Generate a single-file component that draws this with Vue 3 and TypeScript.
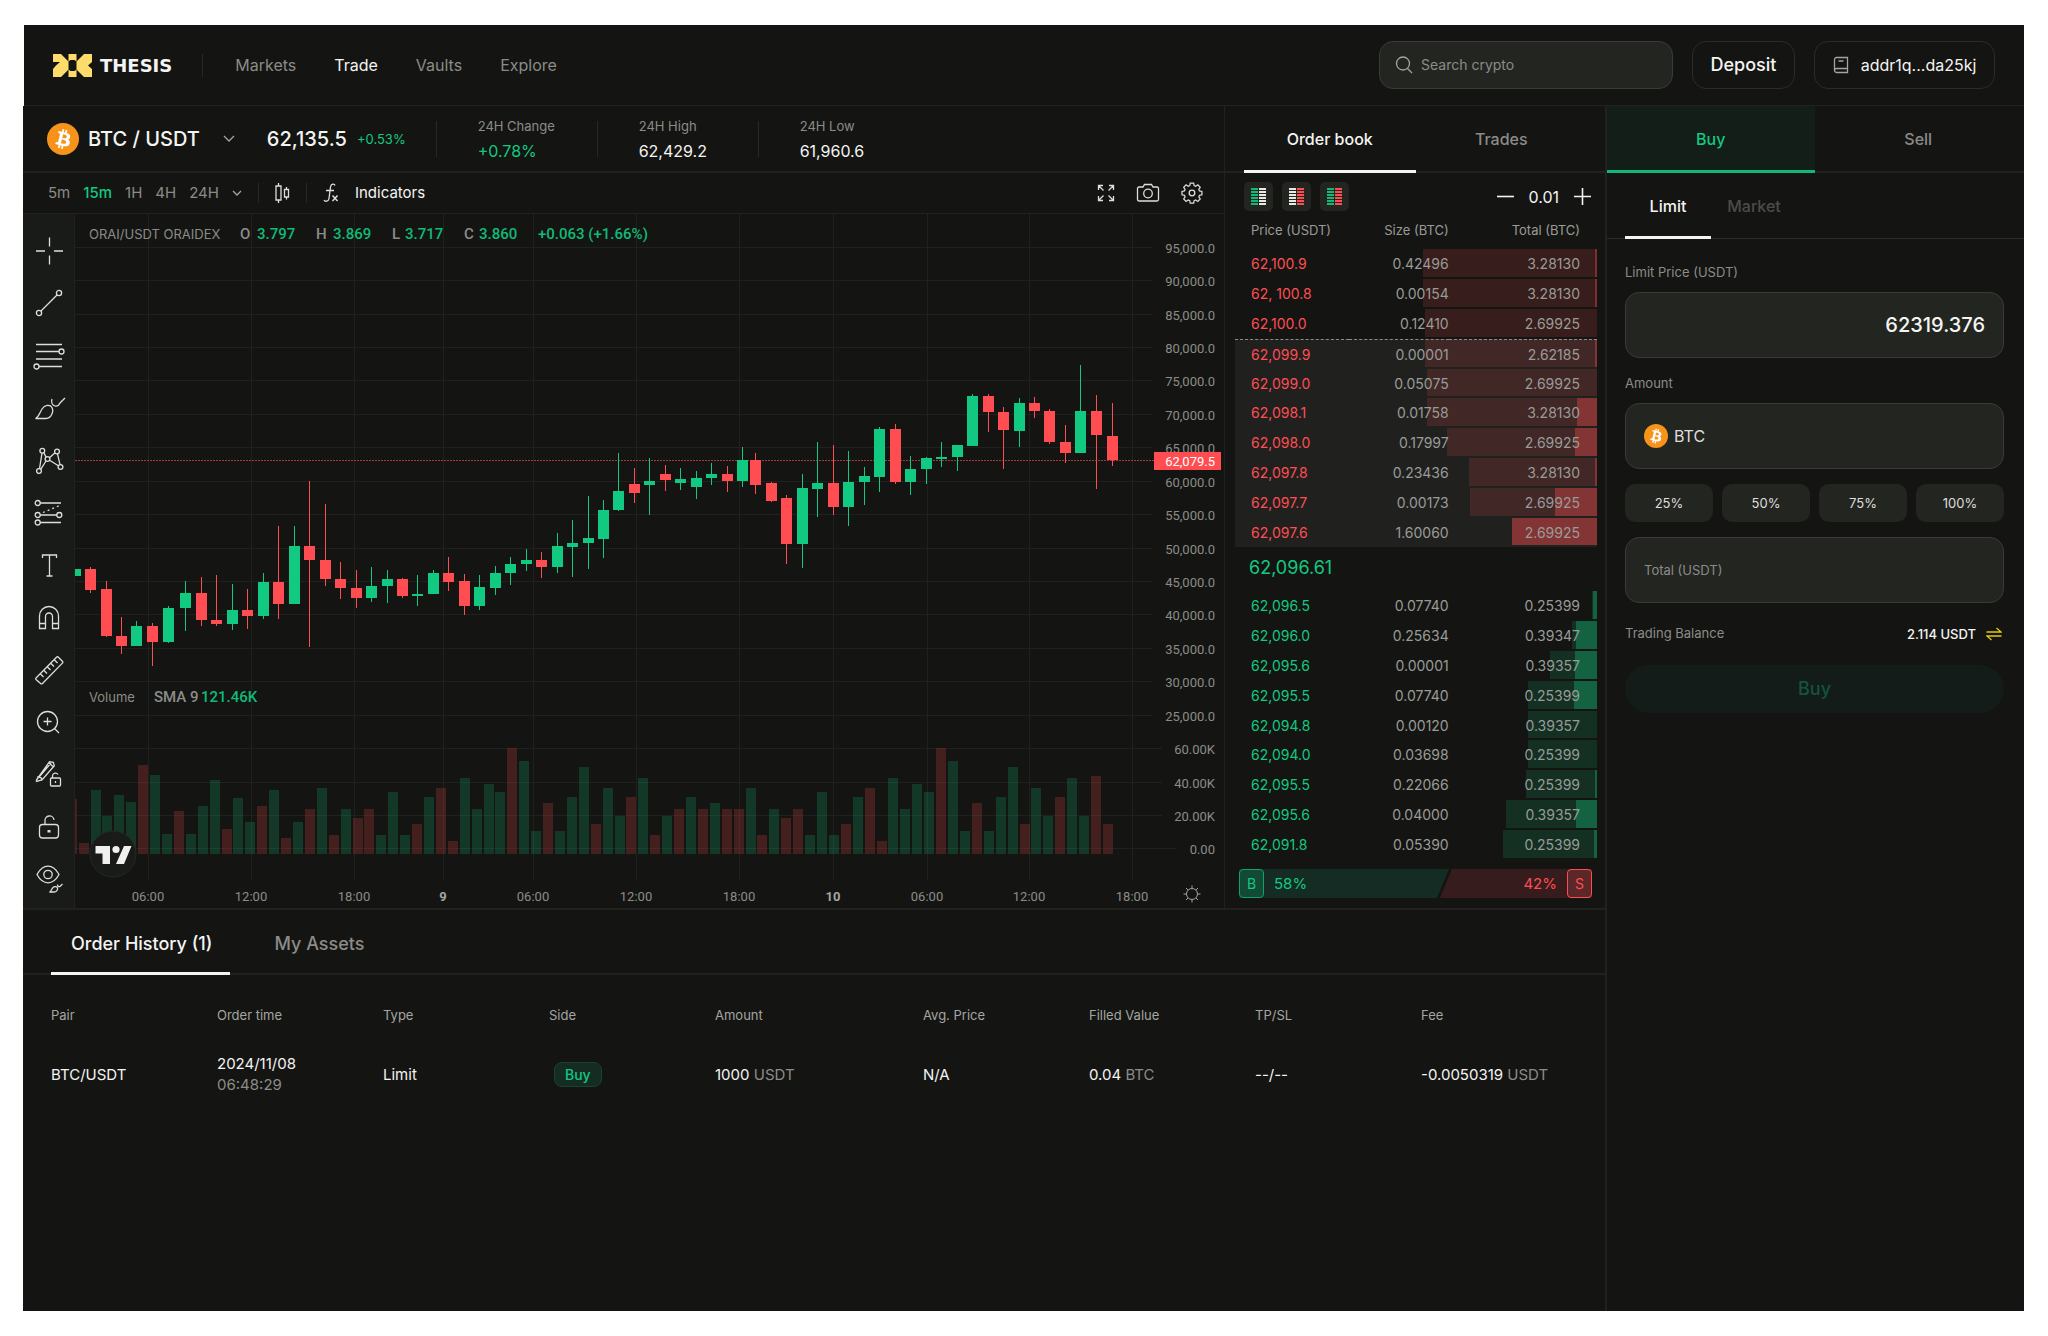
<script setup lang="ts">
import { ref } from 'vue'

type Side = 'up' | 'down'
interface Candle { x: number; side: Side; top: number; bottom: number; high: number; low: number }
interface Level { price: string; size: string; total: string; depth: number; fill: number }

const navLinks = ['Markets', 'Trade', 'Vaults', 'Explore']
const timeframes = ['5m', '15m', '1H', '4H', '24H']
const stats = [
  { label: '24H Change', value: '+0.78%', up: true },
  { label: '24H High', value: '62,429.2', up: false },
  { label: '24H Low', value: '61,960.6', up: false },
]

const gridRows = Array.from({ length: 19 }, (_, i) => ({
  y: Math.round(247.7 + i * 33.43),
  label: i < 15 ? `${95 - i * 5},000.0` : ['60.00K', '40.00K', '20.00K', '0.00'][i - 15],
  end: i < 15 ? 1152 : i < 18 ? 1162 : 1176,
}))
const gridCols = [
  { x: 148, label: '06:00' }, { x: 251, label: '12:00' }, { x: 354, label: '18:00' },
  { x: 443, label: '9', day: true }, { x: 533, label: '06:00' }, { x: 636, label: '12:00' },
  { x: 739, label: '18:00' }, { x: 833, label: '10', day: true }, { x: 927, label: '06:00' },
  { x: 1029, label: '12:00' }, { x: 1132, label: '18:00' },
]

// x, direction (1 = up), body top, body bottom, wick top, wick bottom
const rawCandles: number[][] = [
  [75, 1, 570, 577, 570, 577], [90, 0, 570, 591, 568, 594], [106, 0, 590, 637, 582, 638],
  [121, 0, 637, 647, 618, 655], [136, 1, 627, 647, 622, 647], [152, 0, 627, 643, 624, 667],
  [168, 1, 609, 643, 607, 644], [185, 1, 594, 609, 582, 632], [201, 0, 594, 621, 578, 627],
  [216, 0, 621, 625, 576, 627], [232, 1, 611, 625, 585, 631], [247, 0, 611, 617, 590, 630],
  [263, 1, 583, 617, 574, 620], [278, 0, 583, 605, 527, 620], [294, 1, 547, 605, 527, 605],
  [309, 0, 547, 561, 482, 648], [325, 0, 561, 580, 505, 587], [340, 0, 580, 589, 563, 600],
  [356, 0, 589, 599, 571, 609], [371, 1, 587, 599, 568, 603], [387, 1, 580, 587, 571, 604],
  [402, 0, 580, 597, 579, 599], [417, 1, 595, 597, 576, 607], [433, 1, 574, 595, 571, 595],
  [448, 0, 574, 583, 558, 592], [464, 0, 582, 607, 575, 616], [479, 1, 588, 607, 576, 611],
  [495, 1, 574, 589, 567, 596], [510, 1, 565, 574, 558, 586], [526, 1, 561, 565, 550, 572],
  [541, 0, 561, 568, 553, 579], [557, 1, 547, 568, 534, 574], [572, 1, 544, 548, 521, 578],
  [588, 1, 539, 544, 497, 570], [603, 1, 511, 540, 501, 559], [618, 1, 492, 511, 454, 512],
  [634, 0, 485, 494, 469, 504], [649, 1, 482, 486, 459, 516], [665, 0, 475, 481, 466, 492],
  [680, 1, 480, 484, 469, 491], [696, 1, 479, 488, 472, 500], [711, 1, 475, 479, 464, 486],
  [727, 0, 475, 482, 467, 493], [742, 1, 461, 482, 448, 488], [755, 0, 461, 486, 454, 495],
  [771, 0, 484, 502, 483, 503], [786, 0, 499, 545, 496, 565], [802, 1, 489, 545, 475, 569],
  [817, 1, 484, 490, 443, 518], [833, 0, 484, 508, 446, 516], [848, 1, 483, 508, 452, 527],
  [864, 1, 477, 483, 468, 506], [879, 1, 430, 478, 428, 493], [895, 0, 430, 483, 425, 485],
  [910, 1, 470, 483, 457, 496], [926, 1, 459, 470, 458, 485], [941, 1, 458, 460, 443, 468],
  [957, 1, 446, 458, 446, 472], [972, 1, 397, 447, 395, 447], [988, 0, 397, 413, 395, 433],
  [1003, 0, 413, 431, 408, 470], [1019, 1, 404, 432, 399, 448], [1034, 0, 404, 412, 398, 419],
  [1049, 0, 412, 443, 410, 445], [1065, 0, 443, 454, 426, 464], [1080, 1, 412, 454, 366, 454],
  [1096, 0, 412, 436, 396, 490], [1112, 0, 437, 461, 404, 467],
]
const candles: Candle[] = rawCandles.map(([x, up, top, bottom, high, low]) => ({
  x, side: up ? 'up' : 'down', top, bottom, high, low,
}))

// positive = buying volume, negative = selling volume
const rawVolume = [
  -55, -11, 64, 38, 59, 52, -89, 79, 20, -43, 20, 48, 74, -25, 56, 32, -48, 64, -16, 32, -45, 66, -19, 45,
  -36, -45, 19, 62, 19, -30, 57, -66, -13, 76, 45, 70, 62, -106, 93, 23, -51, 23, 57, 87, -30, 66, 38,
  -57, 76, -19, 38, -45, 57, -45, 51, -45, -45, 66, -19, 45, -36, -45, 19, 62, 19, -30, 57, -66, -13, 76,
  45, 70, 62, -106, 93, 23, -51, 23, 57, 87, -30, 66, 38, -57, 76, 38, -78, -30,
]
const volume = rawVolume.map((v, i) => ({
  x: Math.round(66.7 + i * 11.91),
  height: Math.abs(v),
  side: (v > 0 ? 'up' : 'down') as Side,
}))

const asks: Level[] = [
  { price: '62,100.9', size: '0.42496', total: '3.28130', depth: 174, fill: 2 },
  { price: '62, 100.8', size: '0.00154', total: '3.28130', depth: 174, fill: 2 },
  { price: '62,100.0', size: '0.12410', total: '2.69925', depth: 172, fill: 0 },
  { price: '62,099.9', size: '0.00001', total: '2.62185', depth: 172, fill: 2 },
  { price: '62,099.0', size: '0.05075', total: '2.69925', depth: 170, fill: 0 },
  { price: '62,098.1', size: '0.01758', total: '3.28130', depth: 170, fill: 20 },
  { price: '62,098.0', size: '0.17997', total: '2.69925', depth: 150, fill: 22 },
  { price: '62,097.8', size: '0.23436', total: '3.28130', depth: 128, fill: 2 },
  { price: '62,097.7', size: '0.00173', total: '2.69925', depth: 127, fill: 42 },
  { price: '62,097.6', size: '1.60060', total: '2.69925', depth: 85, fill: 85 },
]
const bids: Level[] = [
  { price: '62,096.5', size: '0.07740', total: '0.25399', depth: 5, fill: 4 },
  { price: '62,096.0', size: '0.25634', total: '0.39347', depth: 25, fill: 21 },
  { price: '62,095.6', size: '0.00001', total: '0.39357', depth: 47, fill: 22 },
  { price: '62,095.5', size: '0.07740', total: '0.25399', depth: 69, fill: 23 },
  { price: '62,094.8', size: '0.00120', total: '0.39357', depth: 69, fill: 0 },
  { price: '62,094.0', size: '0.03698', total: '0.25399', depth: 69, fill: 0 },
  { price: '62,095.5', size: '0.22066', total: '0.25399', depth: 71, fill: 2 },
  { price: '62,095.6', size: '0.04000', total: '0.39357', depth: 91, fill: 21 },
  { price: '62,091.8', size: '0.05390', total: '0.25399', depth: 94, fill: 3 },
]
const barSize = (l: Level) => ({
  backgroundSize: `${l.fill}px calc(100% - 2px), ${l.depth}px calc(100% - 2px)`,
})

const bookViews = [
  { name: 'Bids only', left: '#12b877', right: '#e8e8e6' },
  { name: 'Asks only', left: '#e8e8e6', right: '#ff4d52' },
  { name: 'Bids and asks', left: '#12b877', right: '#ff4d52' },
]

const tools: { name: string; body: string }[] = [
  { name: 'Crosshair', body: '<path d="M1 14h9M19 14h9M14.500 .5v9M14.500 18.500v9"/>' },
  { name: 'Trend line', body: '<circle cx="4" cy="24" r="2.600"/><circle cx="24" cy="4" r="2.600"/><path d="M6 22 22 6"/>' },
  { name: 'Fib retracement', body: '<path d="M1 2.500h26M1 9.500h23M1 17h26M4 24.500h23"/><circle cx="26.500" cy="9.500" r="2.500"/><circle cx="1.500" cy="24.500" r="2.500"/>' },
  { name: 'Brush', body: '<path d="M.5 24.500C4 23 4.500 19 7 15s8-5 10-1.500-.5 11-6 11zM17 5c-1 3 0 6 3 7s4-1 5-3l5-5"/>' },
  { name: 'Patterns', body: '<circle cx="4" cy="25" r="2.400"/><circle cx="7.300" cy="4.700" r="2.400"/><circle cx="12.500" cy="13" r="2.400"/><circle cx="22" cy="5.500" r="2.400"/><circle cx="25.500" cy="21" r="2.400"/><path d="M4.500 22.600 7 7.100M5.700 23.300l5.300-8.300M8.800 6.600l2.300 4.500M14.500 11.700l5.500-4.900M22.500 7.900l2.500 10.700M14.600 14.200l8.800 5.600"/>' },
  { name: 'Long position', body: '<circle cx="2.700" cy="4" r="2.500"/><circle cx="2.700" cy="16" r="2.500"/><circle cx="2.700" cy="23.500" r="2.500"/><circle cx="24.300" cy="16" r="2.500"/><path d="M5.200 4H26M5.200 16h16.600M5.200 23.500H26"/><path d="M8 13.500 26 6" stroke-dasharray="2 3"/>' },
  { name: 'Text', body: '<path d="M7.500 7V4h14v3M14.500 4v21M11.500 25h6"/>' },
  { name: 'Magnet', body: '<path d="M4.500 25.500V13a9.500 9.500 0 0 1 19 0v12.500h-6V13.500a3.500 3.500 0 0 0-7 0v12zM4.500 20.500h6M17.500 20.500h6"/>' },
  { name: 'Measure', body: '<path d="M1 22 21.500 1.200c.6-.6 1.300-.6 1.900 0l4 4c.6.6.6 1.300 0 1.900L7.500 27.500c-.6.6-1.300.6-1.900 0L1 23.500c-.5-.5-.5-1 0-1.500zM5.500 18l3 3M9 14.500l3 3M12.500 11l3 3M16 7.500l3 3M19.500 4l3 3"/>' },
  { name: 'Zoom in', body: '<circle cx="12.500" cy="13.500" r="10"/><path d="M8.500 13.500h8M12.500 9.500v8M19.500 20.500l4.500 4.500"/>' },
  { name: 'Stay in drawing mode', body: '<path d="M1.500 20 14.500 1.700l3.800.6 1 3.500L7 20l-5.500 1.500zM4.500 16.500 16 3M2 17l4 .5 1 2.500M13.500 2.500l5 4.500"/><rect x="15.500" y="18" width="10" height="8" rx="1"/><path d="M17.500 18v-2.500a3 3 0 0 1 5.500-1M20.500 21v2"/>' },
  { name: 'Lock drawings', body: '<rect x="4.500" y="11.500" width="19" height="13.500" rx="3"/><path d="M10 11.500V8a4.500 4.500 0 0 1 9-1"/><path d="M14 17v2.500" stroke-width="3"/>' },
  { name: 'Hide drawings', body: '<path d="M2 9.500C5 4 9 1.200 13 1.200S21 4 24 9.500c-3 5.500-7 8.300-11 8.300S5 15 2 9.500z"/><circle cx="13" cy="9.500" r="4.200"/><path d="M14.500 27c2-1 2-3 3.500-4.500s4-1 4.500.5-1 4-3.500 4zM22.500 19.500c0 2 1.500 2.500 2.500 2l2.500-2.500"/>' },
]

const headings = ['Pair', 'Order time', 'Type', 'Side', 'Amount', 'Avg. Price', 'Filled Value', 'TP/SL', 'Fee']
const percents = ['25%', '50%', '75%', '100%']
const limitPrice = ref('62319.376')
const amount = ref('')
const total = ref('')
const search = ref('')
</script>

<template>
  <div class="page">
    <header class="header">
      <a href="#" class="brand" aria-label="Thesis home">
        <svg width="39" height="23" viewBox="0 0 39 23" fill="#fddc6c" aria-hidden="true">
          <path d="M0 0h8l7.500 7.500v8L8 23H0v-8l3-3.500L7 8H0z" />
          <path d="M15.500 0h8v7.500l-2-1.500h-4l-2 1.500zM15.500 23h8v-7.500l-2 1.500h-4l-2-1.500z" />
          <path d="M39 0h-8l-7.500 7.500v8L31 23h8v-8l-4-3.500L39 8z" />
        </svg>
        <span class="wordmark">THESIS</span>
      </a>
      <span class="rule brand-rule"></span>
      <nav class="nav">
        <a v-for="l in navLinks" :key="l" href="#" :class="{ active: l === 'Trade' }">{{ l }}</a>
      </nav>
      <div class="header-actions">
        <label class="search">
          <svg width="18" height="18" viewBox="0 0 18 18" class="line-icon" aria-hidden="true">
            <circle cx="8" cy="7.500" r="6.500" /><path d="m12.500 12.500 4.500 4.500" />
          </svg>
          <input v-model="search" type="search" placeholder="Search crypto" aria-label="Search crypto" />
        </label>
        <button type="button" class="outline deposit">Deposit</button>
        <button type="button" class="outline wallet">
          <svg width="16" height="18" viewBox="0 0 16 18" class="line-icon" aria-hidden="true">
            <path d="M1.500 14.500v-11a2 2 0 0 1 2-2h11v15h-11a2 2 0 0 1 0-4h11M5.500 5h5" />
          </svg>
          addr1q...da25kj
        </button>
      </div>
    </header>

    <div class="workspace">
      <main class="main">
        <div class="top">
          <section class="chart-panel">
            <div class="pair-row">
              <svg width="32" height="32" viewBox="0 0 32 32" aria-hidden="true">
                <circle cx="16" cy="16" r="16" fill="#f7931a" />
                <path fill="#fff" d="M23.189 14.020c.314-2.096-1.283-3.223-3.465-3.975l.708-2.840-1.728-.43-.69 2.765c-.454-.114-.92-.22-1.385-.326l.695-2.783L15.596 6l-.708 2.839c-.376-.086-.746-.17-1.104-.26l.002-.009-2.384-.595-.46 1.846s1.283.294 1.256.312c.7.175.826.638.805 1.006l-.806 3.235c.048.012.11.03.18.057l-.183-.045-1.130 4.532c-.086.212-.303.531-.793.41.018.025-1.256-.313-1.256-.313l-.858 1.978 2.250.561c.418.105.828.215 1.231.318l-.715 2.872 1.727.43.708-2.840c.472.127.93.245 1.378.357l-.706 2.828 1.728.43.715-2.866c2.948.558 5.164.333 6.097-2.333.752-2.146-.037-3.385-1.588-4.192 1.130-.26 1.980-1.003 2.207-2.538zm-3.950 5.538c-.533 2.147-4.148.986-5.320.695l.95-3.805c1.172.293 4.929.872 4.370 3.110zm.535-5.569c-.487 1.953-3.495.96-4.470.717l.86-3.450c.975.243 4.118.696 3.610 2.733z" />
              </svg>
              <h1 class="pair-name">BTC / USDT</h1>
              <button type="button" class="plain pair-chevron" aria-label="Choose pair">
                <svg width="12" height="8" viewBox="0 0 12 8" class="line-icon"><path d="m1 1 5 5 5-5" /></svg>
              </button>
              <strong class="last-price">62,135.5</strong>
              <span class="last-change">+0.53%</span>
              <dl class="stats">
                <div v-for="s in stats" :key="s.label" class="stat">
                  <div class="stat-body">
                    <dt>{{ s.label }}</dt>
                    <dd :class="{ up: s.up }">{{ s.value }}</dd>
                  </div>
                </div>
              </dl>
            </div>

            <div class="toolbar">
              <div class="frames">
                <button v-for="t in timeframes" :key="t" type="button" class="plain" :class="{ picked: t === '15m' }">{{ t }}</button>
                <button type="button" class="plain" aria-label="More intervals">
                  <svg width="10" height="6" viewBox="0 0 10 6" class="line-icon"><path d="m1 1 4 4 4-4" /></svg>
                </button>
              </div>
              <span class="rule"></span>
              <button type="button" class="plain" aria-label="Candle style">
                <svg width="15" height="20" viewBox="0 0 15 20" class="line-icon bright">
                  <path d="M3.500 0v3M3.500 17v3M1 3h5v14H1zM11.500 4v2.500M11.500 14v2.500M9.500 6.500h4V14h-4z" />
                </svg>
              </button>
              <span class="rule"></span>
              <button type="button" class="plain indicators">
                <svg width="16" height="20" viewBox="0 0 16 20" class="line-icon bright" aria-hidden="true">
                  <path d="M12 2.500C11.500.5 8 .5 7.500 4L6 15.500c-.5 3-4 3.500-5 1.500M3 7.500h8" />
                  <path d="m9.500 12.500 5 5.500M14.500 12.500l-5 5.500" stroke-width="1.500" />
                </svg>
                Indicators
              </button>
              <div class="toolbar-end">
                <button type="button" class="plain" aria-label="Full screen">
                  <svg width="18" height="18" viewBox="0 0 18 18" class="line-icon bright">
                    <path d="M1.500 6V1.500H6M1.500 1.500l5 5M12 1.500h4.500V6M16.500 1.500l-5 5M1.500 12v4.500H6M1.500 16.500l5-5M16.500 12v4.500H12M16.500 16.500l-5-5" />
                  </svg>
                </button>
                <button type="button" class="plain" aria-label="Take a snapshot">
                  <svg width="24" height="20" viewBox="0 0 24 20" class="line-icon bright">
                    <path d="M3 4h4l1.500-2.500h7L17 4h4a1.500 1.500 0 0 1 1.500 1.500v11A1.500 1.500 0 0 1 21 18H3a1.500 1.500 0 0 1-1.500-1.500v-11A1.500 1.500 0 0 1 3 4z" />
                    <circle cx="12" cy="10.500" r="4.300" />
                  </svg>
                </button>
                <button type="button" class="plain" aria-label="Settings">
                  <svg width="22" height="22" viewBox="0 0 22 22" class="line-icon bright">
                    <path d="M9.200 1h3.600l.5 2.600 1.700.7 2.200-1.500 2.500 2.500-1.500 2.200.7 1.700 2.600.5v3.600l-2.600.5-.7 1.700 1.500 2.200-2.500 2.500-2.200-1.500-1.700.7-.5 2.600H9.200l-.5-2.600-1.700-.7-2.200 1.500-2.500-2.500 1.500-2.200-.7-1.700-2.600-.5V9.700l2.600-.5.7-1.700-1.500-2.200 2.500-2.500L7 4.300l1.700-.7z" transform="translate(.5 .2) scale(.95)" />
                    <circle cx="11" cy="11" r="2.800" />
                  </svg>
                </button>
              </div>
            </div>

            <div class="chart-body">
              <div class="tools">
                <button v-for="t in tools" :key="t.name" type="button" class="plain tool" :aria-label="t.name">
                  <svg width="28" height="28" viewBox="0 0 28 28" class="line-icon bright" v-html="t.body"></svg>
                </button>
              </div>
              <svg class="chart" viewBox="75 215 1149 694" role="img" aria-label="Price and volume chart">
                <g class="grid" shape-rendering="crispEdges">
                  <path v-for="r in gridRows" :key="r.y" :d="`M75 ${r.y}.5H${r.end}`" />
                  <path v-for="c in gridCols" :key="c.x" :d="`M${c.x}.5 215V882`" />
                </g>
                <g shape-rendering="crispEdges">
                  <rect v-for="(v, i) in volume" :key="i" :class="v.side" opacity=".2" :x="v.x" :y="855 - v.height" width="10" :height="v.height" />
                </g>
                <path class="price-line" d="M75 461.500H1154" />
                <g v-for="c in candles" :key="c.x" :class="c.side" shape-rendering="crispEdges">
                  <rect :x="c.x" :y="c.high" width="1" :height="c.low - c.high" />
                  <rect :x="c.x - 5" :y="c.top" width="11" :height="c.bottom - c.top" />
                </g>
                <g class="axis">
                  <text v-for="r in gridRows" :key="r.y" x="1215" :y="r.y + 6" text-anchor="end">{{ r.label }}</text>
                  <text v-for="c in gridCols" :key="c.x" :x="c.x" y="902" text-anchor="middle" :class="{ day: c.day }">{{ c.label }}</text>
                </g>
                <rect class="down" x="1154" y="453" width="67" height="18" />
                <text class="price-tag" x="1215" y="467" text-anchor="end">62,079.5</text>
                <g class="legend">
                  <text class="name" x="89" y="240">ORAI/USDT ORAIDEX</text>
                  <text x="240" y="240">O</text><text class="up" x="257" y="240">3.797</text>
                  <text x="316" y="240">H</text><text class="up" x="333" y="240">3.869</text>
                  <text x="392" y="240">L</text><text class="up" x="405" y="240">3.717</text>
                  <text x="464" y="240">C</text><text class="up" x="479" y="240">3.860</text>
                  <text class="up" x="538" y="240">+0.063 (+1.66%)</text>
                  <text class="name" x="89" y="703">Volume</text>
                  <text x="154" y="703">SMA 9</text><text class="up" x="201" y="703">121.46K</text>
                </g>
                <circle cx="113" cy="855" r="23" fill="#191b18" stroke="#272926" />
                <g fill="#f0f0ee">
                  <path d="M95.500 847H110v18h-7.500V854.500h-7zM124 847h7.500l-7.500 18h-8z" />
                  <circle cx="116" cy="850.500" r="3.600" />
                </g>
                <g class="sun" fill="none">
                  <circle cx="1192" cy="895" r="5.500" />
                  <path d="M1192 889v-2.500M1192 901v2.500M1186 895h-2.500M1198 895h2.500M1188 891l-2-2M1196 891l2-2M1188 899l-2 2M1196 899l2 2" />
                </g>
              </svg>
            </div>
          </section>

          <section class="book">
            <div class="tabs book-tabs">
              <button type="button" class="tab active">Order book</button>
              <button type="button" class="tab">Trades</button>
            </div>
            <div class="book-controls">
              <button v-for="v in bookViews" :key="v.name" type="button" class="book-view" :aria-label="v.name">
                <svg width="15" height="17" viewBox="0 0 15 17" aria-hidden="true">
                  <g v-for="n in 6" :key="n">
                    <rect x="0" :y="(n - 1) * 3" width="7" height="2" :fill="v.left" />
                    <rect x="8" :y="(n - 1) * 3" width="7" height="2" :fill="v.right" />
                  </g>
                </svg>
              </button>
              <div class="stepper">
                <button type="button" class="plain" aria-label="Finer grouping">
                  <svg width="17" height="17" viewBox="0 0 17 17" class="line-icon white"><path d="M0 8.500h17" /></svg>
                </button>
                <output>0.01</output>
                <button type="button" class="plain" aria-label="Coarser grouping">
                  <svg width="17" height="17" viewBox="0 0 17 17" class="line-icon white"><path d="M0 8.500h17M8.500 0v17" /></svg>
                </button>
              </div>
            </div>
            <table class="levels">
              <thead>
                <tr><th>Price (USDT)</th><th>Size (BTC)</th><th>Total (BTC)</th></tr>
              </thead>
              <tbody class="asks">
                <tr v-for="(l, i) in asks" :key="l.price" :class="{ near: i > 2, edge: i === 3 }" :style="barSize(l)">
                  <td>{{ l.price }}</td><td>{{ l.size }}</td><td>{{ l.total }}</td>
                </tr>
              </tbody>
              <tbody class="mid">
                <tr><td colspan="3">62,096.61</td></tr>
              </tbody>
              <tbody class="bids">
                <tr v-for="(l, i) in bids" :key="i" :style="barSize(l)">
                  <td>{{ l.price }}</td><td>{{ l.size }}</td><td>{{ l.total }}</td>
                </tr>
              </tbody>
            </table>
            <div class="sentiment">
              <div class="share buyers"><span class="badge">B</span>58%</div>
              <div class="share sellers">42%<span class="badge">S</span></div>
            </div>
          </section>
        </div>

        <section class="history">
          <div class="tabs history-tabs">
            <button type="button" class="tab active">Order History (1)</button>
            <button type="button" class="tab">My Assets</button>
          </div>
          <table class="orders">
            <colgroup>
              <col v-for="(h, i) in headings" :key="h" :class="{ wide: i === 4, rest: i === 8 }" />
            </colgroup>
            <thead>
              <tr><th v-for="h in headings" :key="h">{{ h }}</th></tr>
            </thead>
            <tbody>
              <tr>
                <td>BTC/USDT</td>
                <td>2024/11/08<br /><span class="muted">06:48:29</span></td>
                <td>Limit</td>
                <td><span class="side">Buy</span></td>
                <td>1000 <span class="muted">USDT</span></td>
                <td>N/A</td>
                <td>0.04 <span class="muted">BTC</span></td>
                <td>--/--</td>
                <td>-0.0050319 <span class="muted">USDT</span></td>
              </tr>
            </tbody>
          </table>
        </section>
      </main>

      <aside class="trade">
        <div class="tabs side-tabs">
          <button type="button" class="tab buy">Buy</button>
          <button type="button" class="tab">Sell</button>
        </div>
        <div class="tabs type-tabs">
          <button type="button" class="tab active">Limit</button>
          <button type="button" class="tab dim">Market</button>
        </div>
        <form class="order-form" @submit.prevent>
          <label for="limit-price">Limit Price (USDT)</label>
          <input id="limit-price" v-model="limitPrice" class="field price-field" type="text" inputmode="decimal" />
          <label for="amount">Amount</label>
          <div class="field amount-field">
            <svg width="24" height="24" viewBox="0 0 32 32" aria-hidden="true">
              <circle cx="16" cy="16" r="16" fill="#f7931a" />
              <path fill="#fff" d="M23.189 14.020c.314-2.096-1.283-3.223-3.465-3.975l.708-2.840-1.728-.43-.69 2.765c-.454-.114-.92-.22-1.385-.326l.695-2.783L15.596 6l-.708 2.839c-.376-.086-.746-.17-1.104-.26l.002-.009-2.384-.595-.46 1.846s1.283.294 1.256.312c.7.175.826.638.805 1.006l-.806 3.235c.048.012.11.03.18.057l-.183-.045-1.130 4.532c-.086.212-.303.531-.793.41.018.025-1.256-.313-1.256-.313l-.858 1.978 2.250.561c.418.105.828.215 1.231.318l-.715 2.872 1.727.43.708-2.840c.472.127.93.245 1.378.357l-.706 2.828 1.728.43.715-2.866c2.948.558 5.164.333 6.097-2.333.752-2.146-.037-3.385-1.588-4.192 1.130-.26 1.980-1.003 2.207-2.538zm-3.950 5.538c-.533 2.147-4.148.986-5.320.695l.95-3.805c1.172.293 4.929.872 4.370 3.110zm.535-5.569c-.487 1.953-3.495.96-4.470.717l.86-3.450c.975.243 4.118.696 3.610 2.733z" />
            </svg>
            <span>BTC</span>
            <input id="amount" v-model="amount" type="text" inputmode="decimal" />
          </div>
          <div class="percents">
            <button v-for="p in percents" :key="p" type="button">{{ p }}</button>
          </div>
          <input v-model="total" class="field total-field" type="text" placeholder="Total (USDT)" aria-label="Total (USDT)" />
          <div class="balance">
            <span>Trading Balance</span>
            <span class="balance-value">
              2.114 USDT
              <button type="button" class="plain" aria-label="Transfer">
                <svg width="16" height="14" viewBox="0 0 16 14" fill="none" stroke="#e3c80c" stroke-width="1.300">
                  <path d="M.5 5H15l-4.500-4M15.500 9H1l4.500 4" />
                </svg>
              </button>
            </span>
          </div>
          <button type="submit" class="submit" disabled>Buy</button>
        </form>
      </aside>
    </div>
  </div>
</template>

<style>
body {
  margin: 0;
  background: #fff;
}
</style>

<style scoped>
.page {
  --bg: #141512;
  --line: #212220;
  --text: #f4f4f2;
  --muted: #8b8c89;
  --up: #12c981;
  --down: #ff4d52;
  --field: #232521;
  display: flex;
  flex-direction: column;
  box-sizing: border-box;
  min-height: 100vh;
  padding: 25px 24px 25px 23px;
  color: var(--text);
  font: 400 16px/20px Inter, 'Liberation Sans', sans-serif;
}
button, input {
  box-sizing: border-box;
  font: inherit;
  color: inherit;
}
button {
  cursor: pointer;
}
a {
  color: inherit;
  text-decoration: none;
}
.plain {
  display: flex;
  align-items: center;
  padding: 0;
  border: 0;
  background: none;
}
.line-icon {
  display: block;
  flex: none;
  overflow: visible;
  fill: none;
  stroke: #a4a5a2;
  stroke-width: 1.3;
}
.line-icon.bright {
  stroke: #dededc;
}
.line-icon.white {
  stroke: #f4f4f2;
  stroke-width: 1.6;
}
.rule {
  flex: none;
  width: 1px;
  height: 20px;
  background: #282927;
}
.up {
  color: var(--up);
  fill: var(--up);
}
.down {
  fill: var(--down);
}
.muted {
  color: var(--muted);
}

/* Header */
.header {
  display: flex;
  align-items: center;
  box-sizing: border-box;
  height: 81px;
  margin-left: 1px;
  padding: 0 29px;
  background: var(--bg);
  border-bottom: 1px solid var(--line);
}
.brand {
  display: flex;
  align-items: center;
  gap: 8px;
}
.wordmark {
  font: 700 18px/23px 'DejaVu Sans', sans-serif;
}
.brand-rule {
  height: 23px;
  margin: 0 32px 0 30px;
}
.nav {
  display: flex;
  gap: 38px;
  color: var(--muted);
}
.nav .active {
  color: var(--text);
}
.header-actions {
  display: flex;
  gap: 19px;
  margin-left: auto;
}
.search {
  display: flex;
  align-items: center;
  gap: 8px;
  box-sizing: border-box;
  width: 294px;
  height: 48px;
  padding: 0 15px;
  border: 1px solid #393b38;
  border-radius: 14px;
  background: var(--field);
}
.search input {
  flex: 1;
  min-width: 0;
  padding: 0;
  border: 0;
  outline: 0;
  background: none;
  font-size: 14px;
}
input::placeholder {
  color: var(--muted);
  opacity: 1;
}
.outline {
  display: flex;
  align-items: center;
  justify-content: center;
  gap: 12px;
  height: 48px;
  border: 1px solid #2b2c2a;
  border-radius: 14px;
  background: none;
}
.deposit {
  width: 103px;
  font-size: 18px;
  font-weight: 500;
}
.wallet {
  width: 181px;
  padding: 0;
}

/* Workspace */
.workspace {
  display: grid;
  flex: 1;
  grid-template-columns: minmax(0, 1fr) 419px;
  background: var(--bg);
}
.top {
  display: grid;
  grid-template-columns: minmax(0, 1fr) 381px;
  border-bottom: 2px solid var(--line);
}
.pair-row {
  display: flex;
  align-items: center;
  box-sizing: border-box;
  height: 67px;
  padding-left: 24px;
  border-bottom: 2px solid var(--line);
}
.pair-name {
  margin: 0 23px 0 9px;
  font-size: 20px;
  font-weight: 500;
}
.last-price {
  margin: 0 10px 0 32px;
  font-size: 20px;
  font-weight: 500;
}
.last-change {
  color: var(--up);
  font-size: 13px;
}
.stats {
  display: flex;
  margin: 0 0 0 30px;
}
.stat {
  display: flex;
  align-items: center;
  height: 36px;
  border-left: 1px solid #282927;
}
.stat-body {
  min-width: 78px;
  padding: 0 41px;
}
.stat dt {
  margin-bottom: 5px;
  color: var(--muted);
  font-size: 13px;
}
.stat dd {
  margin: 0;
}
.toolbar {
  display: flex;
  align-items: center;
  box-sizing: border-box;
  height: 41px;
  gap: 16px;
  padding: 0 21px 0 25px;
  border-bottom: 1px solid var(--line);
  font-size: 15px;
}
.frames {
  display: flex;
  gap: 13px;
  color: var(--muted);
}
.picked {
  color: var(--up);
  font-weight: 500;
}
.indicators {
  gap: 16px;
}
.toolbar-end {
  display: flex;
  align-items: center;
  gap: 21px;
  margin-left: auto;
}
.chart-body {
  display: flex;
}
.tools {
  display: flex;
  flex-direction: column;
  flex: none;
  box-sizing: border-box;
  width: 52px;
  padding: 11px 0 3px;
  background: #191b18;
  border-right: 1px solid var(--line);
}
.tool {
  flex: 1;
  justify-content: center;
}
.chart {
  display: block;
  flex: 1;
  min-width: 0;
}
.grid path {
  stroke: #20211f;
}
.price-line {
  stroke: #a33a3c;
  stroke-dasharray: 2 1;
}
.axis text, .price-tag {
  fill: var(--muted);
  font: 400 13px Roboto, sans-serif;
}
.axis .day {
  fill: #a4a5a2;
  font-weight: 700;
}
.price-tag {
  fill: #fff;
}
.legend text {
  fill: var(--muted);
  font: 500 15px Roboto, sans-serif;
}
.legend .up {
  fill: #10ba78;
}
.legend .name {
  font: 400 13px Inter, sans-serif;
}
.sun {
  stroke: #a4a5a2;
}

/* Tabs */
.tabs {
  display: flex;
  box-shadow: inset 0 -2px var(--line);
}
.tab {
  padding: 2px 0 0;
  border: 0;
  border-bottom: 3px solid transparent;
  background: none;
  color: var(--muted);
  font-weight: 500;
}
.tab.active {
  border-color: #f4f4f2;
  color: var(--text);
}
.tab.dim {
  color: #4b4c4a;
}
.tab.buy {
  border-color: #12b877;
  background: #131e19;
  color: var(--up);
}

/* Order book */
.book {
  border-left: 1px solid var(--line);
}
.book-tabs {
  height: 67px;
  padding: 0 18px 0 19px;
}
.book-tabs .tab, .side-tabs .tab {
  flex: 1;
}
.book-controls {
  display: flex;
  gap: 9px;
  padding: 9px 14px 0 19px;
}
.book-view {
  display: grid;
  place-items: center;
  width: 29px;
  height: 29px;
  padding: 0;
  border: 0;
  border-radius: 5px;
  background: var(--field);
}
.stepper {
  display: flex;
  align-items: center;
  gap: 15px;
  margin-left: auto;
}
.levels {
  width: calc(100% - 18px);
  margin: 0 8px 0 10px;
  border-spacing: 0;
  table-layout: fixed;
  font-size: 14px;
  text-align: right;
}
.levels th, .levels td {
  padding: 0;
  color: #9a9b98;
  font-weight: 400;
}
.levels th {
  width: 30%;
  height: 38px;
  font-size: 13px;
}
.levels th:last-child {
  width: 40%;
}
.levels th:first-child, .levels td:first-child {
  padding-left: 16px;
  text-align: left;
  white-space: nowrap;
}
.levels th:last-child, .levels td:last-child {
  padding-right: 17px;
}
.levels tr {
  height: 30px;
}
.levels tr:nth-child(5n) {
  height: 29px;
}
.asks tr, .bids tr {
  background-repeat: no-repeat;
  background-position: right top;
}
.asks tr {
  background-image: linear-gradient(rgba(255, 77, 82, .35), rgba(255, 77, 82, .35)), linear-gradient(rgba(255, 77, 82, .15), rgba(255, 77, 82, .15));
}
.bids tr {
  background-image: linear-gradient(rgba(18, 201, 129, .33), rgba(18, 201, 129, .33)), linear-gradient(rgba(18, 201, 129, .15), rgba(18, 201, 129, .15));
}
.asks .near {
  background-color: #20211f;
}
.asks .edge td {
  border-top: 1px dashed #8b8c89;
}
.asks td:first-child {
  color: var(--down);
}
.bids td:first-child, .mid td:first-child {
  color: var(--up);
}
.mid tr {
  height: 44px;
}
.mid td:first-child {
  padding: 0 0 2px 14px;
  font-size: 18px;
}
.sentiment {
  display: flex;
  margin: 9px 13px 9px 14px;
  font-size: 15px;
}
.share {
  display: flex;
  align-items: center;
  height: 29px;
  gap: 10px;
}
.buyers {
  flex: 58;
  margin-right: -9px;
  background: #142c23;
  color: var(--up);
  clip-path: polygon(0 0, 100% 0, calc(100% - 12px) 100%, 0 100%);
}
.sellers {
  flex: 42;
  justify-content: flex-end;
  background: #371c1d;
  color: var(--down);
  clip-path: polygon(12px 0, 100% 0, 100% 100%, 0 100%);
}
.badge {
  display: grid;
  place-items: center;
  box-sizing: border-box;
  width: 25px;
  height: 29px;
  border: 1px solid #12a06b;
  border-radius: 4px;
  background: #134a36;
  font-size: 14px;
}
.sellers .badge {
  border-color: #ff4d52;
  background: #5c2729;
}

/* Order history */
.history-tabs {
  height: 65px;
  gap: 24px;
  padding-left: 28px;
}
.history-tabs .tab {
  padding: 6px 18px 0 20px;
  font-size: 18px;
}
.orders {
  width: 100%;
  padding-left: 28px;
  border-spacing: 0;
  table-layout: fixed;
  text-align: left;
}
.orders col {
  width: 166px;
}
.orders .wide {
  width: 208px;
}
.orders .rest {
  width: auto;
}
.orders th {
  height: 78px;
  padding: 2px 0 0;
  box-sizing: border-box;
  color: #a4a5a2;
  font-size: 13px;
  font-weight: 400;
}
.orders td {
  padding: 0;
  font-size: 15px;
  line-height: 21px;
}
.side {
  display: inline-block;
  margin-left: 5px;
  padding: 1px 10px;
  border: 1px solid #17432f;
  border-radius: 8px;
  background: #142c23;
  color: var(--up);
  font-size: 14px;
  font-weight: 500;
}

/* Trade panel */
.trade {
  border-left: 2px solid var(--line);
}
.side-tabs {
  height: 67px;
  padding-right: 2px;
}
.type-tabs {
  height: 66px;
  padding-left: 18px;
  box-shadow: inset 0 -1px #2b2c2a;
}
.type-tabs .tab {
  width: 86px;
}
.order-form {
  display: flex;
  flex-direction: column;
  padding: 23px 20px 0 18px;
  color: var(--muted);
  font-size: 13px;
}
.field {
  box-sizing: border-box;
  width: 100%;
  height: 66px;
  margin: 10px 0 15px;
  padding: 0 18px;
  border: 1px solid #3a3b39;
  border-radius: 14px;
  outline: 0;
  background: var(--field);
  color: var(--text);
}
.price-field {
  font-size: 20px;
  font-weight: 500;
  text-align: right;
}
.amount-field {
  display: flex;
  align-items: center;
  gap: 6px;
  color: #dededc;
  font-size: 16px;
}
.amount-field input {
  flex: 1;
  min-width: 0;
  padding: 0;
  border: 0;
  outline: 0;
  background: none;
  text-align: right;
}
.percents {
  display: flex;
  gap: 9px;
}
.percents button {
  flex: 1;
  height: 38px;
  padding: 0;
  border: 0;
  border-radius: 10px;
  background: var(--field);
  color: #dededc;
}
.total-field {
  margin: 15px 0 20px;
}
.balance {
  display: flex;
  justify-content: space-between;
}
.balance-value {
  display: flex;
  align-items: center;
  gap: 10px;
  padding: 1px 2px 0 0;
  color: var(--text);
  font-weight: 500;
}
.submit {
  height: 48px;
  margin-top: 21px;
  border: 0;
  border-radius: 24px;
  background: #131c18;
  color: #14543b;
  font-size: 18px;
  font-weight: 500;
}
</style>
